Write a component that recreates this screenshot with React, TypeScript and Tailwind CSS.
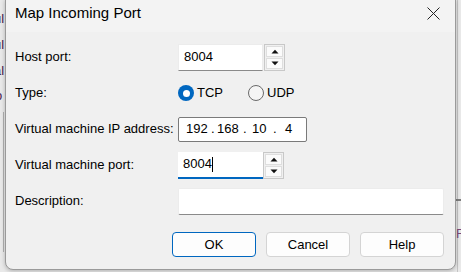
import React from "react";

const font = { fontFamily: '"Liberation Sans", Arial, sans-serif' };

function Spinner() {
  return (
    <div className="flex flex-col w-[21px] h-[27px] border border-[#c8c8c8] bg-[#f0f0f0] p-px gap-px">
      <div className="flex-1 flex items-center justify-center bg-[#fbfbfb] border border-[#dedede]">
        <svg width="8" height="5" viewBox="0 0 8 5">
          <path d="M0.5 4.5 L4 0.8 L7.5 4.5 Z" fill="#111" />
        </svg>
      </div>
      <div className="flex-1 flex items-center justify-center bg-[#fbfbfb] border border-[#dedede]">
        <svg width="8" height="5" viewBox="0 0 8 5">
          <path d="M0.5 0.5 L4 4.2 L7.5 0.5 Z" fill="#111" />
        </svg>
      </div>
    </div>
  );
}

function Row({ label, children }: { label: string; children: React.ReactNode }) {
  return (
    <div className="flex items-center h-[36px]">
      <div className="w-[172px] shrink-0 pl-[9px] text-[13px] text-black whitespace-nowrap">{label}</div>
      <div className="flex items-center flex-1">{children}</div>
    </div>
  );
}

function Button({ label, primary }: { label: string; primary?: boolean }) {
  return (
    <div
      className={
        primary
          ? "w-[84px] h-[25px] flex items-center justify-center rounded-[4px] border border-[#0067c0] bg-[#fdfdfd] text-[13px] text-black"
          : "w-[84px] h-[25px] flex items-center justify-center rounded-[4px] border border-[#d4d4d4] bg-[#fdfdfd] text-[13px] text-black"
      }
    >
      {label}
    </div>
  );
}

export default function App() {
  return (
    <div className="relative w-[461px] h-[272px] overflow-hidden bg-[#d9d9d9]" style={font}>
      {/* window behind the dialog */}
      <div className="absolute inset-0 bg-[#e9e9e9]">
        <span className="absolute left-[-6px] top-[9px] text-[13px] text-[#4a2450]">ul</span>
        <span className="absolute left-[-6px] top-[35px] text-[13px] text-[#4a2450]">ul</span>
        <span className="absolute left-[-6px] top-[61px] text-[13px] text-[#4a2450]">al</span>
        <span className="absolute left-[-5px] top-[86px] text-[13px] text-[#4a2450]">o</span>
        <div className="absolute left-[3px] top-[112px] h-[140px] w-px bg-[#b0b0b0]" />
        <div className="absolute left-[457px] top-0 h-full w-px bg-[#c4c4c4]" />
        <div className="absolute left-[456px] top-[199px] w-[6px] h-[2px] bg-[#7d7d7d]" />
        <span className="absolute left-[456px] top-[224px] text-[13px] text-[#7a4a7a]">F</span>
      </div>

      {/* dialog */}
      <div className="absolute left-[5px] top-[-1px] w-[451px] h-[271px] flex flex-col bg-[#f0f0f0] border border-[#9a9a9a] rounded-b-[8px] shadow-[0_1px_4px_rgba(0,0,0,0.25)]">
        <div className="h-[32px] shrink-0 flex items-center justify-between bg-[#f3f3f3] pl-[9px] pr-[15px] pb-[6px]">
          <span className="text-[15px] text-black">Map Incoming Port</span>
          <svg width="13" height="13" viewBox="0 0 13 13">
            <path d="M0.5 0.5 L12.5 12.5 M12.5 0.5 L0.5 12.5" stroke="#222" strokeWidth="1" />
          </svg>
        </div>

        <div className="flex flex-col pt-[7px] pr-[10px]">
          <Row label="Host port:">
            <div className="flex items-center">
              <div className="w-[85px] h-[27px] flex items-center pl-[5px] bg-white border border-[#ececec] border-b-[#8a8a8a] text-[13px] text-black">
                8004
              </div>
              <div className="ml-px">
                <Spinner />
              </div>
            </div>
          </Row>

          <Row label="Type:">
            <div className="flex items-center">
              <div className="w-[16px] h-[16px] rounded-full bg-[#0067c0] flex items-center justify-center">
                <div className="w-[7px] h-[7px] rounded-full bg-white" />
              </div>
              <span className="ml-[3px] text-[13px] text-black">TCP</span>
              <div className="ml-[25px] w-[16px] h-[16px] rounded-full border border-[#6a6a6a] bg-[#f5f5f5]" />
              <span className="ml-[3px] text-[13px] text-black">UDP</span>
            </div>
          </Row>

          <Row label="Virtual machine IP address:">
            <div className="w-[129px] h-[25px] flex items-center pl-[7px] bg-white border border-[#7a7a7a] rounded-[2px] text-[13px] text-black">
              <span className="w-[25px]">192</span>
              <span className="w-[6px]">.</span>
              <span className="w-[26px]">168</span>
              <span className="w-[9px]">.</span>
              <span className="w-[21px]">10</span>
              <span className="w-[12px]">.</span>
              <span>4</span>
            </div>
          </Row>

          <Row label="Virtual machine port:">
            <div className="flex items-center">
              <div className="w-[85px] h-[27px] flex items-center pl-[5px] bg-white border-b-2 border-[#0067c0] text-[13px] text-black">
                8004
                <span className="w-px h-[15px] bg-black" />
              </div>
              <div>
                <Spinner />
              </div>
            </div>
          </Row>

          <Row label="Description:">
            <div className="w-[266px] h-[27px] bg-white border border-[#ececec] border-b-[#8a8a8a] rounded-[2px]" />
          </Row>
        </div>

        <div className="flex justify-end gap-[10px] pr-[11px] pt-[13px]">
          <Button label="OK" primary />
          <Button label="Cancel" />
          <Button label="Help" />
        </div>
      </div>
    </div>
  );
}
